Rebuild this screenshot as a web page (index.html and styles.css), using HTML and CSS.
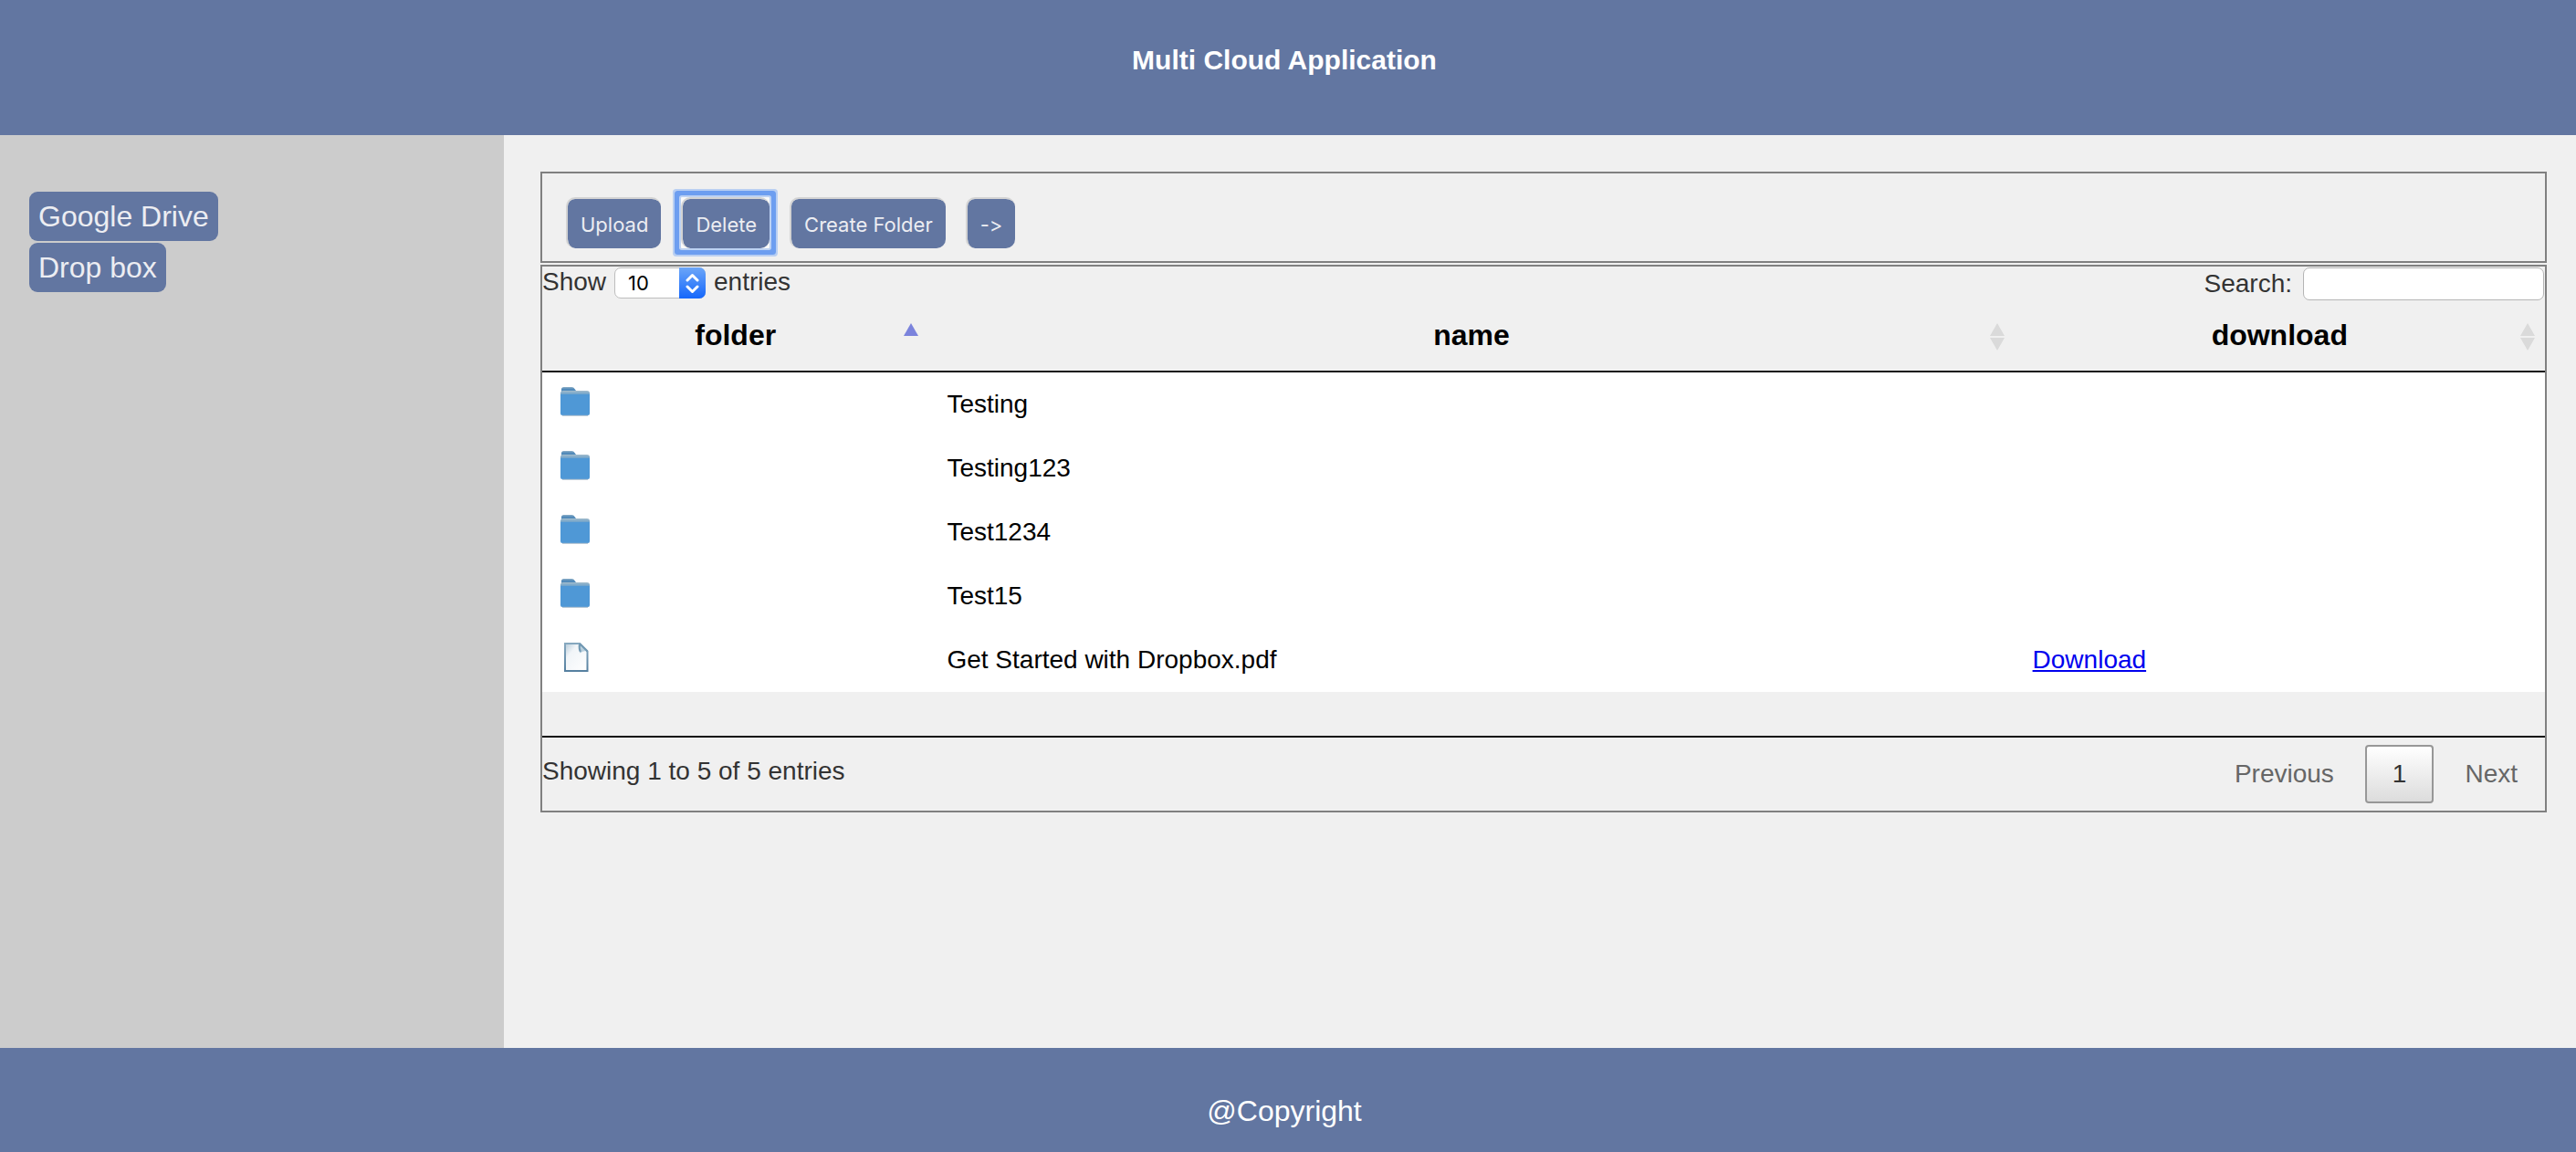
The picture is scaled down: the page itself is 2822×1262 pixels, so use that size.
FILE: index.html
```html
<!DOCTYPE html>
<html lang="en">
<head>
<meta charset="utf-8">
<title>Multi Cloud Application</title>
<link rel="stylesheet" href="styles.css">
</head>
<body>
<svg class="defs" aria-hidden="true">
  <defs>
    <linearGradient id="folder-tab" x1="0" y1="0" x2="0" y2="1">
      <stop offset="0" stop-color="#8fb0c8"/>
      <stop offset="0.3" stop-color="#4f88b8"/>
      <stop offset="1" stop-color="#6b9fc6"/>
    </linearGradient>
    <linearGradient id="folder-back" x1="0" y1="0" x2="0" y2="1">
      <stop offset="0" stop-color="#a3bccb"/>
      <stop offset="1" stop-color="#5f9bcb"/>
    </linearGradient>
    <linearGradient id="page-fill" x1="0" y1="0" x2="1" y2="1">
      <stop offset="0" stop-color="#b4c9d8"/>
      <stop offset="0.3" stop-color="#f1f5f8"/>
      <stop offset="1" stop-color="#ffffff"/>
    </linearGradient>
    <linearGradient id="page-edge" x1="0" y1="0" x2="0" y2="1">
      <stop offset="0" stop-color="#86a8bf"/>
      <stop offset="1" stop-color="#5680a0"/>
    </linearGradient>
    <symbol id="folder" viewBox="0 0 32 32">
      <path d="M1 8V2.500Q1 0 3.500 0h9q2 0 3 2l1.500 2v4z" fill="url(#folder-tab)"/>
      <path d="M0 9V7q0-3 3-3h26q3 0 3 3v2z" fill="url(#folder-back)"/>
      <path d="M0 8h32v21q0 2-2 2H2q-2 0-2-2z" fill="#4f98d6"/>
      <path d="M2 31.300h28" stroke="#a9bccb"/>
    </symbol>
    <symbol id="page" viewBox="0 0 32 32">
      <path d="M5 1h16l8.500 8.500V31H5z" fill="url(#page-fill)" stroke="url(#page-edge)" stroke-width="2"/>
      <path d="M19.500 1.500q.5 7 2 10 3-3 7.500-2.500z" fill="#b9cfdd"/>
      <path d="M21 2q-1 5 1 8M21 1l8.500 8.500" fill="none" stroke="#7299b3" stroke-width="2"/>
    </symbol>
    <symbol id="sort" viewBox="0 0 16 30">
      <path d="M8 0l8 14H0zM0 16h16l-8 14z"/>
    </symbol>
    <symbol id="sort-asc" viewBox="0 0 16 30">
      <path d="M8 0l8 14H0z"/>
    </symbol>
  </defs>
</svg>

<header class="site-header">
  <h1 class="site-title">Multi Cloud Application</h1>
</header>

<div class="layout">
  <nav class="sidebar">
    <button type="button" class="nav-button">Google Drive</button>
    <button type="button" class="nav-button">Drop box</button>
  </nav>

  <main class="content">
    <div class="toolbar">
      <button type="button" class="tool-button">Upload</button>
      <span class="focus-ring"><button type="button" class="tool-button">Delete</button></span>
      <button type="button" class="tool-button">Create Folder</button>
      <button type="button" class="tool-button">-&gt;</button>
    </div>

    <section class="files">
      <div class="controls">
        <div class="length">
          <label for="length">Show</label>
          <span class="select-box">
            <select id="length" class="select">
              <option>10</option>
              <option>25</option>
              <option>50</option>
              <option>100</option>
            </select>
            <svg class="select-arrows" viewBox="0 0 29 34" aria-hidden="true">
              <path d="M9 14l5.500-5.500 5.500 5.500M9 21l5.500 5.500 5.500-5.500"/>
            </svg>
          </span>
          <span>entries</span>
        </div>
        <div class="search">
          <label for="search">Search:</label>
          <input id="search" class="search-input" type="search">
        </div>
      </div>

      <div class="table-area">
        <table class="table">
          <colgroup>
            <col class="col-folder">
            <col class="col-name">
            <col class="col-download">
          </colgroup>
          <thead>
            <tr>
              <th scope="col" aria-sort="ascending">folder<svg class="sort-icon sort-icon-active" aria-hidden="true"><use href="#sort-asc"/></svg></th>
              <th scope="col">name<svg class="sort-icon" aria-hidden="true"><use href="#sort"/></svg></th>
              <th scope="col">download<svg class="sort-icon" aria-hidden="true"><use href="#sort"/></svg></th>
            </tr>
          </thead>
          <tbody>
            <tr><td class="icon-cell"><svg class="file-icon" role="img" aria-label="Folder"><use href="#folder"/></svg></td><td>Testing</td><td></td></tr>
            <tr><td class="icon-cell"><svg class="file-icon" role="img" aria-label="Folder"><use href="#folder"/></svg></td><td>Testing123</td><td></td></tr>
            <tr><td class="icon-cell"><svg class="file-icon" role="img" aria-label="Folder"><use href="#folder"/></svg></td><td>Test1234</td><td></td></tr>
            <tr><td class="icon-cell"><svg class="file-icon" role="img" aria-label="Folder"><use href="#folder"/></svg></td><td>Test15</td><td></td></tr>
            <tr><td class="icon-cell"><svg class="file-icon" role="img" aria-label="File"><use href="#page"/></svg></td><td>Get Started with Dropbox.pdf</td><td><a class="download-link" href="#">Download</a></td></tr>
          </tbody>
        </table>
      </div>

      <div class="table-footer">
        <div class="info">Showing 1 to 5 of 5 entries</div>
        <div class="pagination">
          <button type="button" class="page-button">Previous</button>
          <button type="button" class="page-button page-button-current">1</button>
          <button type="button" class="page-button">Next</button>
        </div>
      </div>
    </section>
  </main>
</div>

<footer class="site-footer">@Copyright</footer>
</body>
</html>
```
FILE: styles.css
```css
* {
  box-sizing: border-box;
}

body {
  margin: 0;
  min-height: 100vh;
  display: flex;
  flex-direction: column;
  background: #f0f0f0;
  color: #333;
  font-family: "Liberation Sans", Arial, sans-serif;
  font-size: 28px;
  line-height: 32px;
}

button,
input,
select {
  margin: 0;
  font: inherit;
}

.defs {
  position: absolute;
  width: 0;
  height: 0;
}

.site-header {
  padding: 49px 8px 65px 0;
  background: #6276a1;
  text-align: center;
}

.site-title {
  margin: 0;
  color: #fff;
  font-size: 30px;
  line-height: 34px;
}

.layout {
  flex: 1;
  display: flex;
}

.sidebar {
  flex: 0 0 552px;
  display: flex;
  flex-direction: column;
  align-items: flex-start;
  gap: 2px;
  padding: 62px 32px;
  background: #ccc;
}

.nav-button {
  height: 54px;
  padding: 0 10px;
  border: 0;
  border-radius: 9px;
  background: #6276a1;
  color: #ecedf2;
  font-size: 32px;
}

.content {
  flex: 1;
  padding: 40px 32px 40px 40px;
  display: flex;
  flex-direction: column;
  gap: 2px;
}

.toolbar {
  display: flex;
  gap: 22px;
  padding: 26px 26px 14px;
  border: 2px solid #808080;
}

.tool-button {
  display: block;
  height: 56px;
  padding: 2px 14px 0;
  border: solid #d3d3d3;
  border-width: 2px 0 0 2px;
  border-radius: 10px;
  background: #6276a1;
  background-clip: padding-box;
  color: #ecedf2;
  font-family: Inter, sans-serif;
  font-size: 22px;
  font-feature-settings: "calt" 0;
}

.focus-ring {
  border-radius: 1px;
  background: #fafafa;
  box-shadow: 0 0 0 2px #bdd2f3, 0 0 0 7px #6d9ef0, 0 0 0 9px #b9cff2;
}

.files {
  border: 2px solid #808080;
}

.controls {
  display: flex;
  justify-content: space-between;
  align-items: flex-start;
  padding: 1px 1px 0 0;
}

.length {
  display: flex;
  gap: 9px;
}

.select-box {
  position: relative;
  display: block;
  width: 100px;
  height: 34px;
}

.select {
  display: block;
  width: 100%;
  height: 100%;
  padding: 0 32px 0 14px;
  border: 1px solid #bdbdbd;
  border-radius: 7px;
  background: #fff;
  color: #000;
  font-family: Inter, sans-serif;
  font-size: 22px;
  appearance: none;
}

.select-arrows {
  position: absolute;
  top: 0;
  right: 0;
  width: 29px;
  height: 34px;
  border-radius: 0 7px 7px 0;
  background: linear-gradient(#6ca6f8, #1567fb);
  fill: none;
  stroke: #fff;
  stroke-width: 3;
  stroke-linecap: round;
  stroke-linejoin: round;
  pointer-events: none;
}

.search {
  display: flex;
  align-items: center;
  gap: 12px;
}

.search-input {
  width: 264px;
  height: 36px;
  padding: 0 8px;
  border: 1px solid #b5b5b5;
  border-radius: 7px;
  background: #fff;
  font-size: 22px;
}

.table-area {
  padding-bottom: 48px;
  border-bottom: 2px solid #111;
}

.table {
  width: 100%;
  table-layout: fixed;
  border-collapse: separate;
  border-spacing: 0;
  color: #000;
}

.col-folder {
  width: 19.3%;
}

.col-name {
  width: 54.2%;
}

.col-download {
  width: 26.5%;
}

.table th {
  position: relative;
  padding: 20px 36px;
  border-bottom: 2px solid #111;
  font-size: 32px;
  line-height: 37px;
}

.sort-icon {
  position: absolute;
  top: 25px;
  right: 11px;
  width: 16px;
  height: 30px;
  fill: #dadada;
}

.sort-icon-active {
  fill: #7b83dc;
}

.table td {
  height: 70px;
  padding: 16px 20px;
  background: #fff;
}

.table .icon-cell {
  vertical-align: top;
}

.file-icon {
  display: block;
  width: 32px;
  height: 32px;
}

.download-link {
  color: #00e;
}

.table-footer {
  display: flex;
  justify-content: space-between;
  padding: 8px 0;
}

.info {
  padding-top: 13px;
}

.pagination {
  display: flex;
  gap: 4px;
}

.page-button {
  padding: 14px 28px;
  border: 2px solid transparent;
  border-radius: 4px;
  background: none;
  color: #666;
}

.page-button-current {
  border-color: #979797;
  background: linear-gradient(#fff, #dcdcdc);
  background-clip: padding-box;
  color: #333;
}

.site-footer {
  padding: 51px 8px 26px 0;
  background: #6276a1;
  color: #fff;
  font-size: 32px;
  line-height: 37px;
  text-align: center;
}
```
